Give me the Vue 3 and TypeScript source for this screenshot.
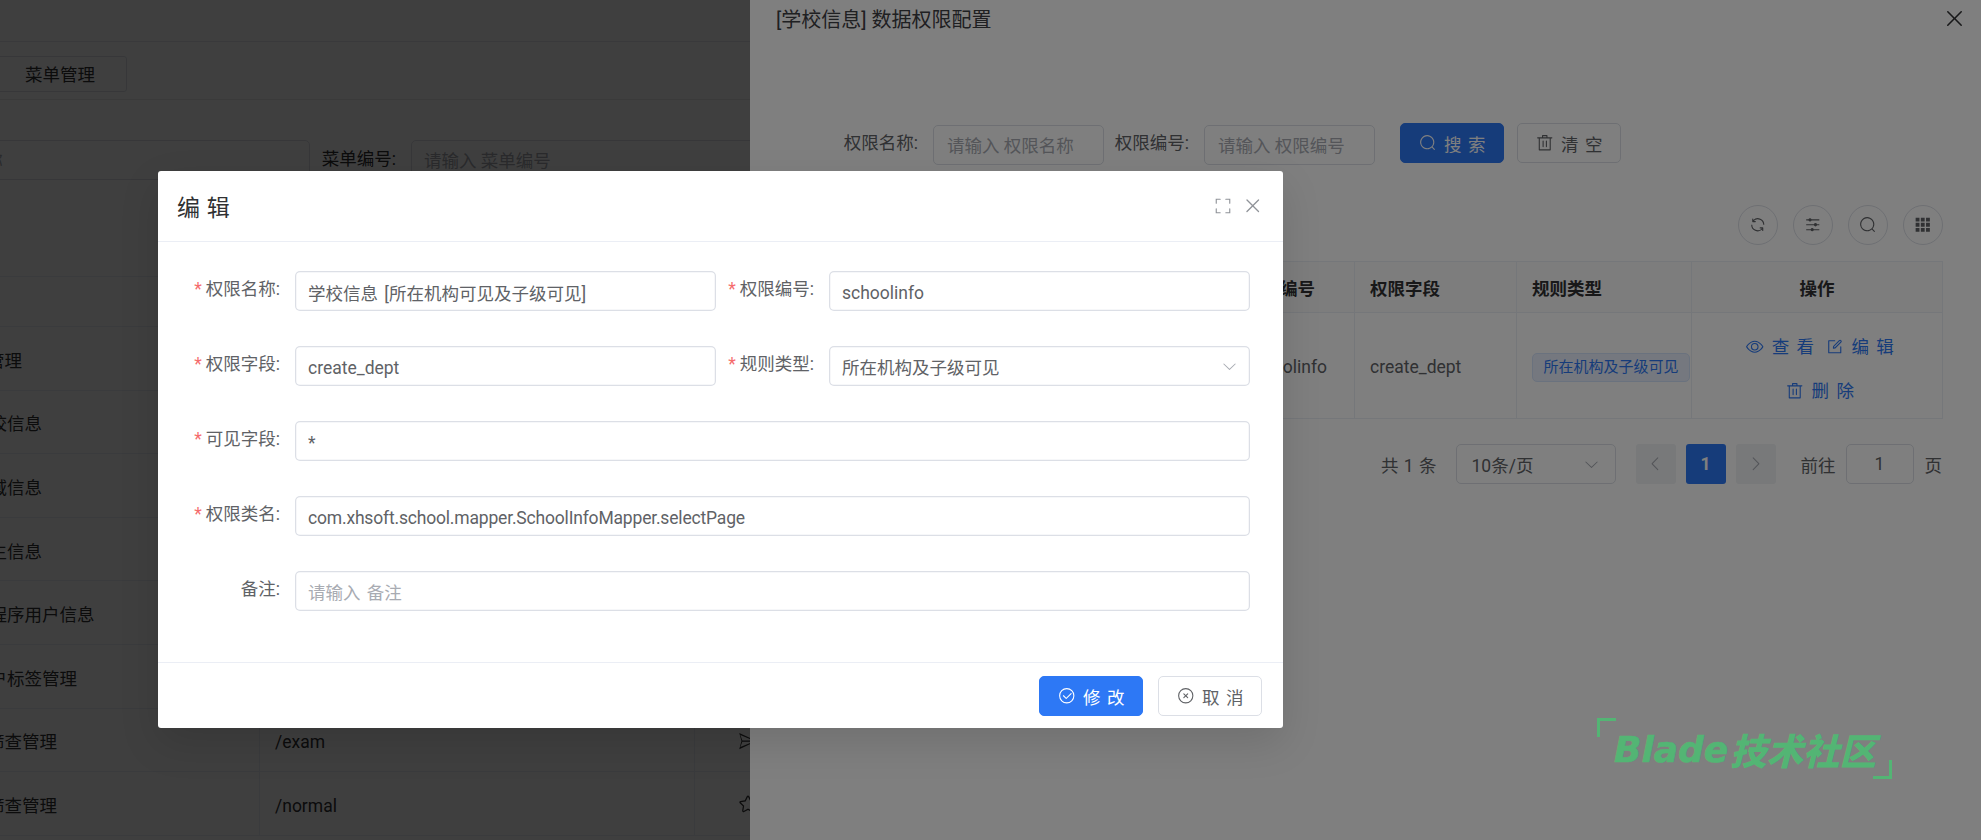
<script setup lang="ts">
const icons: Record<string, string> = {
  search: 'm795.904 750.72 124.992 124.928a32 32 0 0 1-45.248 45.248L750.656 795.904a416 416 0 1 1 45.248-45.248zM480 832a352 352 0 1 0 0-704 352 352 0 0 0 0 704z',
  del: 'M160 256H96a32 32 0 0 1 0-64h256V95.936a32 32 0 0 1 32-32h256a32 32 0 0 1 32 32V192h256a32 32 0 1 1 0 64h-64v672a32 32 0 0 1-32 32H192a32 32 0 0 1-32-32V256zm448-64v-64H416v64h192zM224 896h576V256H224v640zm192-128a32 32 0 0 1-32-32V416a32 32 0 0 1 64 0v320a32 32 0 0 1-32 32zm192 0a32 32 0 0 1-32-32V416a32 32 0 0 1 64 0v320a32 32 0 0 1-32 32z',
  close: 'M764.288 214.592 512 466.88 259.712 214.592a31.936 31.936 0 0 0-45.12 45.12L466.752 512 214.528 764.224a31.936 31.936 0 1 0 45.12 45.184L512 557.184l252.288 252.288a31.936 31.936 0 0 0 45.12-45.12L557.12 512.064l252.288-252.352a31.936 31.936 0 1 0-45.12-45.184z',
  check: 'M512 896a384 384 0 1 0 0-768 384 384 0 0 0 0 768zm0 64a448 448 0 1 1 0-896 448 448 0 0 1 0 896zM745.344 361.344a32 32 0 0 1 45.312 45.312l-288 288a32 32 0 0 1-45.312 0l-160-160a32 32 0 1 1 45.312-45.312L480 626.752l265.344-265.408z',
  cancel: 'm466.752 512-90.496-90.496a32 32 0 0 1 45.248-45.248L512 466.752l90.496-90.496a32 32 0 1 1 45.248 45.248L557.248 512l90.496 90.496a32 32 0 1 1-45.248 45.248L512 557.248l-90.496 90.496a32 32 0 0 1-45.248-45.248L466.752 512zM512 896a384 384 0 1 0 0-768 384 384 0 0 0 0 768zm0 64a448 448 0 1 1 0-896 448 448 0 0 1 0 896z',
  view: 'M512 160c320 0 512 352 512 352S832 864 512 864 0 512 0 512s192-352 512-352zm0 64c-225.28 0-384.128 208.064-436.8 288 52.608 79.872 211.456 288 436.8 288 225.28 0 384.128-208.064 436.8-288-52.608-79.872-211.456-288-436.8-288zm0 64a224 224 0 1 1 0 448 224 224 0 0 1 0-448zm0 64a160.192 160.192 0 0 0-160 160c0 88.192 71.744 160 160 160s160-71.808 160-160-71.744-160-160-160z',
  edit: 'M832 512a32 32 0 1 1 64 0v352a32 32 0 0 1-32 32H160a32 32 0 0 1-32-32V160a32 32 0 0 1 32-32h352a32 32 0 0 1 0 64H192v640h640V512zm-362.048 42.24 52.8-7.552L847.104 222.4a32 32 0 1 0-45.248-45.248L477.44 501.44l-7.552 52.8zm422.4-422.4a96 96 0 0 1 0 135.808l-331.84 331.84a32 32 0 0 1-18.112 9.088L436.8 623.68a32 32 0 0 1-36.224-36.224l15.104-105.6a32 32 0 0 1 9.024-18.112l331.904-331.84a96 96 0 0 1 135.744 0z',
  down: 'M831.872 340.864 512 652.672 192.128 340.864a30.592 30.592 0 0 0-42.752 0 29.12 29.12 0 0 0 0 41.6L489.664 714.24a32 32 0 0 0 44.672 0l340.288-331.712a29.12 29.12 0 0 0 0-41.6 30.592 30.592 0 0 0-42.752 0z',
  left: 'M609.408 149.376 277.76 489.6a32 32 0 0 0 0 44.672l331.648 340.352a29.12 29.12 0 0 0 41.728 0 30.592 30.592 0 0 0 0-42.752L339.264 511.936l311.872-319.872a30.592 30.592 0 0 0 0-42.688 29.12 29.12 0 0 0-41.728 0z',
  right: 'M340.864 149.312a30.592 30.592 0 0 0 0 42.752L652.736 512 340.864 831.872a30.592 30.592 0 0 0 0 42.752 29.12 29.12 0 0 0 41.728 0L714.24 534.336a32 32 0 0 0 0-44.672L382.592 149.376a29.12 29.12 0 0 0-41.728 0z',
  full: 'm160 96.064 192 .192a32 32 0 0 1 0 64l-192-.192V352a32 32 0 0 1-64 0V96h64v.064zm0 831.872V928H96V672a32 32 0 1 1 64 0v191.936l192-.192a32 32 0 1 1 0 64l-192 .192zM864 96.064V96h64v256a32 32 0 1 1-64 0V160.064l-192 .192a32 32 0 1 1 0-64l192-.192zm0 831.872-192-.192a32 32 0 0 1 0-64l192 .192V672a32 32 0 1 1 64 0v256h-64v-.064z',
  refresh: 'M771.776 794.88A384 384 0 0 1 128 512h64a320 320 0 0 0 555.712 216.448H654.72a32 32 0 1 1 0-64h149.056a32 32 0 0 1 32 32v148.928a32 32 0 1 1-64 0v-50.56zM276.288 295.616h92.992a32 32 0 0 1 0 64H220.16a32 32 0 0 1-32-32V178.56a32 32 0 0 1 64 0v50.56A384 384 0 0 1 896.128 512h-64a320 320 0 0 0-555.776-216.384z',
  oper: 'M389.44 768a96.064 96.064 0 0 1 181.12 0H896v64H570.56a96.064 96.064 0 0 1-181.12 0H128v-64h261.44zm192-288a96.064 96.064 0 0 1 181.12 0H896v64H762.56a96.064 96.064 0 0 1-181.12 0H128v-64h453.44zm-320-288a96.064 96.064 0 0 1 181.12 0H896v64H442.56a96.064 96.064 0 0 1-181.12 0H128v-64h133.44z',
  grid: 'M96 96h224v224H96zM400 96h224v224H400zM704 96h224v224H704zM96 400h224v224H96zM400 400h224v224H400zM704 400h224v224H704zM96 704h224v224H96zM400 704h224v224H400zM704 704h224v224H704z',
  star: 'm512 747.84 228.16 119.936a6.4 6.4 0 0 0 9.28-6.72l-43.52-254.08 184.512-179.904a6.4 6.4 0 0 0-3.52-10.88l-255.104-37.12L517.76 147.904a6.4 6.4 0 0 0-11.52 0L392.192 379.072l-255.104 37.12a6.4 6.4 0 0 0-3.52 10.88L318.08 606.976l-43.584 254.08a6.4 6.4 0 0 0 9.28 6.72L512 747.84zM313.6 924.48a70.4 70.4 0 0 1-102.144-74.24l37.888-220.928L88.96 472.96A70.4 70.4 0 0 1 128 352.896l221.76-32.256 99.2-200.96a70.4 70.4 0 0 1 126.208 0l99.2 200.96 221.824 32.256a70.4 70.4 0 0 1 39.04 120.064L774.72 629.376l37.888 220.928a70.4 70.4 0 0 1-102.144 74.24L512 820.096l-198.4 104.32z',
  send: 'M64 96 960 512 64 928 176 512zM120 200 222 480H780zM222 544 120 824 780 544z'
}

type MenuRow = { name: string; level: number; path: string; icon: string }
const rows: MenuRow[] = [
  { name: '菜单管理', level: 0, path: '', icon: '' },
  { name: '学校信息', level: 1, path: '', icon: '' },
  { name: '地域信息', level: 1, path: '', icon: '' },
  { name: '学生信息', level: 1, path: '', icon: '' },
  { name: '小程序用户信息', level: 1, path: '', icon: '' },
  { name: '用户标签管理', level: 1, path: '', icon: '' },
  { name: '考试筛查管理', level: 0, path: '/exam', icon: 'send' },
  { name: '常规筛查管理', level: 0, path: '/normal', icon: 'star' }
]

type Field = { label: string; value: string; required: boolean; wide: boolean; placeholder?: string; select?: boolean; tight?: boolean }
const fields: Field[] = [
  { label: '权限名称:', value: '学校信息 [所在机构可见及子级可见]', required: true, wide: false },
  { label: '权限编号:', value: 'schoolinfo', required: true, wide: false },
  { label: '权限字段:', value: 'create_dept', required: true, wide: false },
  { label: '规则类型:', value: '所在机构及子级可见', required: true, wide: false, select: true },
  { label: '可见字段:', value: '*', required: true, wide: true },
  { label: '权限类名:', value: 'com.xhsoft.school.mapper.SchoolInfoMapper.selectPage', required: true, wide: true, tight: true },
  { label: '备注:', value: '', required: false, wide: true, placeholder: '请输入 备注' }
]
const tools = ['refresh', 'oper', 'search', 'grid']
</script>

<template>
  <div class="screen">
    <!-- underlying menu page -->
    <div class="page">
      <div class="topbar"></div>
      <div class="tabs"><span class="tab">菜单管理</span></div>
      <div class="content">
        <div class="p-search">
          <input class="p-input first" placeholder="请输入 菜单名称" readonly />
          <label class="p-label">菜单编号:</label>
          <input class="p-input" placeholder="请输入 菜单编号" readonly />
        </div>
        <div class="p-table">
          <div class="p-row head"><span></span><span></span><span></span></div>
          <div v-for="r in rows" :key="r.name" class="p-row">
            <span class="p-name" :class="r.level ? 'lv1' : 'lv0'">{{ r.name }}</span>
            <span class="p-path">{{ r.path }}</span>
            <span class="p-icon">
              <svg v-if="r.icon" class="ic" viewBox="0 0 1024 1024"><path :d="icons[r.icon]" fill-rule="evenodd" /></svg>
            </span>
          </div>
        </div>
      </div>
    </div>
    <div class="mask"></div>

    <!-- drawer -->
    <aside class="drawer">
      <header class="d-head">
        <span class="d-title">[学校信息] 数据权限配置</span>
        <svg class="ic d-close" viewBox="0 0 1024 1024"><path :d="icons.close" /></svg>
      </header>
      <div class="d-search">
        <label class="d-label">权限名称:</label>
        <input class="d-input" placeholder="请输入 权限名称" readonly />
        <label class="d-label">权限编号:</label>
        <input class="d-input" placeholder="请输入 权限编号" readonly />
        <button class="btn primary d-btn first">
          <svg class="ic" viewBox="0 0 1024 1024"><path :d="icons.search" /></svg><span>搜 索</span>
        </button>
        <button class="btn d-btn">
          <svg class="ic" viewBox="0 0 1024 1024"><path :d="icons.del" /></svg><span>清 空</span>
        </button>
      </div>
      <div class="d-tools">
        <span v-for="t in tools" :key="t" class="circle">
          <svg class="ic" viewBox="0 0 1024 1024"><path :d="icons[t]" /></svg>
        </span>
      </div>
      <div class="d-table">
        <div class="d-row d-headrow">
          <div class="cell">权限名称</div>
          <div class="cell">权限编号</div>
          <div class="cell">权限字段</div>
          <div class="cell">规则类型</div>
          <div class="cell center">操作</div>
        </div>
        <div class="d-row d-bodyrow">
          <div class="cell txt">学校信息 [所在机构可见及子级可见]</div>
          <div class="cell txt">schoolinfo</div>
          <div class="cell txt">create_dept</div>
          <div class="cell"><span class="tag">所在机构及子级可见</span></div>
          <div class="cell actions">
            <span class="act"><svg class="ic" viewBox="0 0 1024 1024"><path :d="icons.view" /></svg>查 看</span>
            <span class="act"><svg class="ic" viewBox="0 0 1024 1024"><path :d="icons.edit" /></svg>编 辑</span>
            <span class="act"><svg class="ic" viewBox="0 0 1024 1024"><path :d="icons.del" /></svg>删 除</span>
          </div>
        </div>
      </div>
      <div class="pager">
        <span class="total">共 1 条</span>
        <div class="size">
          <span>10条/页</span>
          <svg class="ic" viewBox="0 0 1024 1024"><path :d="icons.down" /></svg>
        </div>
        <span class="pg off"><svg class="ic" viewBox="0 0 1024 1024"><path :d="icons.left" /></svg></span>
        <span class="pg on">1</span>
        <span class="pg off"><svg class="ic" viewBox="0 0 1024 1024"><path :d="icons.right" /></svg></span>
        <span class="goto">前往</span>
        <span class="jump">1</span>
        <span class="unit">页</span>
      </div>
    </aside>
    <div class="mask"></div>

    <!-- dialog -->
    <section class="modal">
      <header class="m-head">
        <span class="m-title">编 辑</span>
        <svg class="ic m-full" viewBox="0 0 1024 1024"><path :d="icons.full" /></svg>
        <svg class="ic m-close" viewBox="0 0 1024 1024"><path :d="icons.close" /></svg>
      </header>
      <div class="m-form">
        <template v-for="f in fields" :key="f.label">
          <label class="f-label"><i v-if="f.required">*</i>{{ f.label }}</label>
          <div class="f-ctl" :class="{ wide: f.wide }">
            <input v-if="!f.select" class="f-input" :class="{ tight: f.tight }" :value="f.value" :placeholder="f.placeholder" readonly />
            <div v-else class="f-input f-select">
              <span>{{ f.value }}</span>
              <svg class="ic" viewBox="0 0 1024 1024"><path :d="icons.down" /></svg>
            </div>
          </div>
        </template>
      </div>
      <footer class="m-foot">
        <button class="btn primary">
          <svg class="ic" viewBox="0 0 1024 1024"><path :d="icons.check" /></svg><span>修 改</span>
        </button>
        <button class="btn">
          <svg class="ic" viewBox="0 0 1024 1024"><path :d="icons.cancel" /></svg><span>取 消</span>
        </button>
      </footer>
    </section>

    <div class="mark">
      <i class="corner tl"></i>
      <span class="m-en">Blade</span><span class="m-cn">技术社区</span>
      <i class="corner br"></i>
    </div>
  </div>
</template>

<style>
html, body { margin: 0; background: #fff; }
</style>

<style scoped>
.screen {
  position: relative;
  width: 1981px;
  height: 840px;
  overflow: hidden;
  background: #fff;
  font-family: Roboto, "Noto Sans CJK SC", sans-serif;
  font-size: 17.5px;
  color: #606266;
}
.ic { width: 1em; height: 1em; fill: currentColor; flex: none; display: block; }
input { font: inherit; color: inherit; outline: none; background: #fff; box-sizing: border-box; margin: 0; }
input::placeholder { color: #a8abb2; opacity: 1; }
button { font: inherit; }

/* page */
.page { position: absolute; inset: 0; background: #f5f6f7; overflow: hidden; }
.topbar { height: 42px; background: #fff; border-bottom: 1px solid #e4e7ed; box-sizing: border-box; }
.tabs { height: 58px; background: #fff; border-bottom: 1px solid #e8e8e8; box-sizing: border-box; padding-top: 14px; }
.tab {
  display: block; width: 133px; height: 36px; margin-left: -6px; box-sizing: border-box;
  border: 1px solid #dcdfe6; border-radius: 3px; padding-left: 30px; line-height: 37px; color: #303133;
}
.content { background: #fff; height: 740px; box-sizing: border-box; padding-top: 40px; }
.p-search { display: flex; margin-left: -138px; }
.p-input { width: 448px; height: 40px; border: 1px solid #dcdfe6; border-radius: 5px; padding: 2px 12px 0; }
.p-input.first { padding-left: 13px; }
.p-label { width: 101px; flex: none; text-align: right; padding-right: 15px; box-sizing: border-box; line-height: 38px; color: #303133; white-space: nowrap; }
.p-table { margin-top: 96px; }
.p-row {
  display: grid; grid-template-columns: 260px 435px 286px; height: 63.6px; align-items: center;
  border-bottom: 1px solid #ebeef5; box-sizing: border-box; color: #303133;
}
.p-row.head { height: 51px; border-top: 1px solid #ebeef5; }
.p-row > span { height: 100%; display: flex; align-items: center; white-space: nowrap; border-right: 1px solid #ebeef5; box-sizing: border-box; padding-top: 2px; }
.p-name.lv0 { margin-left: -48px; width: 308px; }
.p-name.lv1 { margin-left: -28px; width: 288px; }
.p-row > .p-path { padding-left: 15px; padding-top: 5px; }
.p-icon { padding-left: 43px; font-size: 20px; }

/* masks */
.mask { position: absolute; inset: 0; background: rgba(0, 0, 0, .5); }

/* drawer */
.drawer {
  position: absolute; top: 0; right: 0; bottom: 0; width: 1231px; background: #fff;
  box-sizing: border-box; padding: 0 38px 0 26px; color: #606266;
}
.d-head { height: 37px; display: flex; align-items: center; justify-content: space-between; }
.d-title { font-size: 20px; color: #3f4044; }
.d-close { font-size: 25px; color: #303133; margin: 0 -24px 0 0; }
.d-search { display: flex; align-items: flex-start; margin-top: 86px; padding-left: 57px; }
.d-label { width: 100px; flex: none; box-sizing: border-box; padding-right: 15px; text-align: right; white-space: nowrap; line-height: 36px; margin-top: 2px; }
.d-input { width: 171px; height: 40px; margin-top: 2px; border: 1px solid #dcdfe6; border-radius: 5px; padding: 2px 13px 0; flex: none; }
.btn {
  width: 104px; height: 40px; border: 1px solid #dcdfe6; border-radius: 5px; background: #fff; color: #606266;
  display: inline-flex; align-items: center; justify-content: center; gap: 8px; padding: 0; box-sizing: border-box;
  white-space: nowrap; word-spacing: 2px;
}
.btn.primary { background: #2d78f5; border-color: #2d78f5; color: #fff; }
.d-btn { margin-left: 13px; flex: none; }
.d-btn.first { margin-left: 25px; }
.d-tools { display: flex; justify-content: flex-end; gap: 15px; margin-top: 40px; }
.circle {
  width: 40px; height: 40px; border: 1px solid #dcdfe6; border-radius: 50%; box-sizing: border-box;
  display: flex; align-items: center; justify-content: center;
}
.d-table { margin-top: 16px; border: 1px solid #ebeef5; border-bottom: 0; }
.d-row { display: grid; grid-template-columns: 453px 125px 162px 175px 1fr; border-bottom: 1px solid #ebeef5; box-sizing: border-box; }
.d-headrow { height: 51px; background: #fafafa; font-weight: 700; color: #303133; }
.d-bodyrow { height: 106px; }
.cell { display: flex; align-items: center; padding: 0 15px; box-sizing: border-box; border-right: 1px solid #ebeef5; white-space: nowrap; min-width: 0; }
.cell.txt { padding-top: 3px; }
.cell:last-child { border-right: 0; }
.cell.center { justify-content: center; }
.tag {
  height: 29px; width: 158px; flex: none; box-sizing: border-box; display: flex; align-items: center; justify-content: center;
  font-size: 15px; line-height: 1; color: #2d78f5; background: #eaf1fe; border: 1px solid #d5e4fd; border-radius: 5px; margin-top: 3px;
}
.actions { flex-wrap: wrap; justify-content: center; align-content: center; row-gap: 20px; column-gap: 12px; padding: 7px 34px 0 40px; color: #2d78f5; word-spacing: 3px; }
.act { display: inline-flex; align-items: center; gap: 8px; height: 24px; line-height: 24px; }
.pager { display: flex; align-items: center; justify-content: flex-end; margin: 25px 1px 0 0; height: 40px; }
.total { margin-right: 19px; word-spacing: 1px; }
.size {
  width: 160px; height: 40px; border: 1px solid #dcdfe6; border-radius: 5px; box-sizing: border-box;
  display: flex; align-items: center; justify-content: space-between; padding: 0 15px; margin-right: 20px;
}
.size .ic { color: #a8abb2; font-size: 17px; }
.pg { width: 40px; height: 40px; border-radius: 3px; display: flex; align-items: center; justify-content: center; margin-right: 10px; box-sizing: border-box; }
.pg.off { background: #f0f2f5; color: #a8abb2; }
.pg.on { background: #2d78f5; color: #fff; font-weight: 700; }
.goto { margin-left: 15px; margin-right: 10px; }
.jump { width: 68px; height: 40px; border: 1px solid #dcdfe6; border-radius: 5px; box-sizing: border-box; display: flex; align-items: center; justify-content: center; margin-right: 11px; }

/* modal */
.modal {
  position: absolute; left: 158px; top: 171px; width: 1125px; height: 557px; background: #fff; border-radius: 3px;
  box-shadow: 0 15px 40px rgba(0, 0, 0, .12); display: flex; flex-direction: column;
}
.m-head { height: 71px; flex: none; display: flex; align-items: center; padding-left: 19px; border-bottom: 1px solid #ebeef5; box-sizing: border-box; }
.m-title { font-size: 23px; color: #303133; flex: 1; word-spacing: 1px; }
.m-full { font-size: 18px; color: #909399; margin-right: 10px; }
.m-close { font-size: 21.5px; color: #909399; margin-right: 20px; }
.m-form {
  flex: 1; display: grid; grid-template-columns: 120px 421px 113px 421px; grid-auto-rows: 40px; row-gap: 35px;
  padding: 29px 0 0 17px; align-content: start; border-bottom: 1px solid #ebeef5;
}
.f-label { padding-right: 15px; text-align: right; line-height: 36px; white-space: nowrap; }
.f-label i { font-style: normal; color: #f56c6c; margin-right: 4px; }
.f-ctl.wide { grid-column: 2 / 5; }
.f-input {
  width: 100%; height: 40px; box-sizing: border-box; border: 0; box-shadow: inset 0 0 0 1.25px #dcdfe6; border-radius: 5px;
  padding: 3px 13px 0; background: #fff; word-spacing: 2px;
}
.f-input.tight { letter-spacing: -.18px; }
.f-select { display: flex; align-items: center; justify-content: space-between; padding: 1px 12px 0 13px; }
.f-select .ic { color: #a8abb2; font-size: 17px; }
.m-foot { height: 65px; flex: none; display: flex; justify-content: flex-end; gap: 15px; padding: 13px 21px 0 0; box-sizing: border-box; }

/* watermark */
.mark {
  position: absolute; left: 1597px; top: 718px; width: 295px; height: 61px; box-sizing: border-box; padding: 2px 0 0 17px;
  display: flex; align-items: center; color: #53b574; font-style: italic; white-space: nowrap;
}
.m-en { font-family: "DejaVu Sans", sans-serif; font-size: 36px; line-height: 40px; font-weight: 700; width: 116px; -webkit-text-stroke: .6px #53b574; }
.m-cn { font-family: "Noto Sans CJK SC", sans-serif; font-size: 36.5px; line-height: 40px; font-weight: 900; }
.corner { position: absolute; width: 16px; height: 16px; border: 0 solid #53b574; }
.corner.tl { left: 0; top: 0; border-width: 3px 0 0 3px; }
.corner.br { right: 0; bottom: 0; border-width: 0 3px 3px 0; }
</style>
